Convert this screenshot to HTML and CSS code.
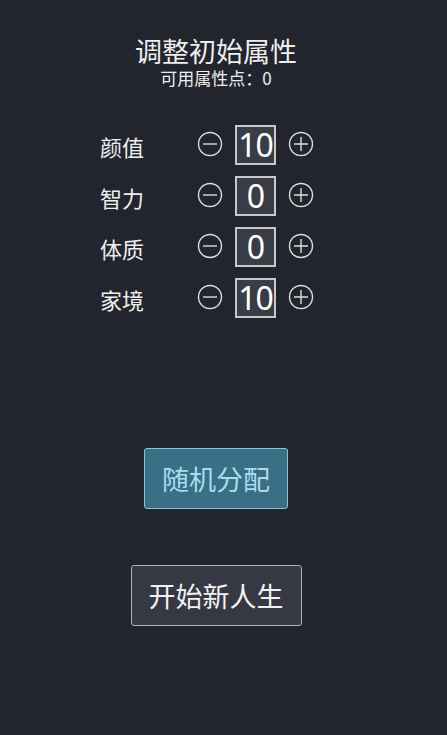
FILE: index.html
```html
<!doctype html>
<html lang="zh-CN">
<head>
  <meta charset="UTF-8">
  <meta name="viewport" content="width=device-width, initial-scale=1">
  <title>调整初始属性</title>
  <link rel="stylesheet" href="styles.css">
</head>
<body>
  <div class="page">
    <h1 class="title">调整初始属性</h1>
    <p class="points">可用属性点：0</p>

    <div class="attrs">
      <div class="row">
        <span class="label">颜值</span>
        <button class="step"><svg viewBox="0 0 26 26"><circle cx="13" cy="13" r="11.5"/><path d="M6 13h14"/></svg></button>
        <span class="value">10</span>
        <button class="step"><svg viewBox="0 0 26 26"><circle cx="13" cy="13" r="11.5"/><path d="M6 13h14M13 6v14"/></svg></button>
      </div>
      <div class="row">
        <span class="label">智力</span>
        <button class="step"><svg viewBox="0 0 26 26"><circle cx="13" cy="13" r="11.5"/><path d="M6 13h14"/></svg></button>
        <span class="value">0</span>
        <button class="step"><svg viewBox="0 0 26 26"><circle cx="13" cy="13" r="11.5"/><path d="M6 13h14M13 6v14"/></svg></button>
      </div>
      <div class="row">
        <span class="label">体质</span>
        <button class="step"><svg viewBox="0 0 26 26"><circle cx="13" cy="13" r="11.5"/><path d="M6 13h14"/></svg></button>
        <span class="value">0</span>
        <button class="step"><svg viewBox="0 0 26 26"><circle cx="13" cy="13" r="11.5"/><path d="M6 13h14M13 6v14"/></svg></button>
      </div>
      <div class="row">
        <span class="label">家境</span>
        <button class="step"><svg viewBox="0 0 26 26"><circle cx="13" cy="13" r="11.5"/><path d="M6 13h14"/></svg></button>
        <span class="value">10</span>
        <button class="step"><svg viewBox="0 0 26 26"><circle cx="13" cy="13" r="11.5"/><path d="M6 13h14M13 6v14"/></svg></button>
      </div>
    </div>

    <button class="btn btn-random">随机分配</button>
    <button class="btn btn-start">开始新人生</button>
  </div>
</body>
</html>
```

FILE: styles.css
```css
html, body {
  height: 100%;
}
body {
  margin: 0;
  background: #22252d;
  color: #eee;
  font-family: "Noto Sans CJK SC", "Noto Sans", sans-serif;
}
.page {
  width: 432px;
  display: flex;
  flex-direction: column;
  align-items: center;
  padding-top: 37px;
}
.title {
  margin: 0;
  font-size: 27px;
  font-weight: normal;
  line-height: 28px;
  color: #eee;
}
.points {
  margin: 2px 0 0;
  font-size: 17px;
  line-height: 21px;
  color: #eee;
}
.attrs {
  width: 232px;
  margin-top: 37px;
  display: flex;
  flex-direction: column;
  gap: 11px;
}
.row {
  display: flex;
  align-items: center;
  height: 40px;
}
.label {
  width: 97px;
  font-size: 22px;
  line-height: 40px;
  padding-top: 2px;
}
.step {
  width: 26px;
  height: 26px;
  padding: 0;
  border: 0;
  background: none;
  margin-top: -2px;
}
.step svg {
  display: block;
  width: 26px;
  height: 26px;
  fill: none;
  stroke: #ddd;
  stroke-width: 1.4;
}
.value {
  box-sizing: border-box;
  width: 41px;
  height: 40px;
  margin: 0 12px;
  border: 2px solid #c8c8c8;
  background: #3a3d46;
  color: #fff;
  font-family: "Noto Sans", sans-serif;
  font-size: 32px;
  line-height: 36px;
  text-align: center;
  letter-spacing: -1px;
}
.btn {
  box-sizing: border-box;
  height: 61px;
  border-radius: 3px;
  font-family: "Noto Sans CJK SC", "Noto Sans", sans-serif;
  font-size: 27px;
  padding: 0;
}
.btn-random {
  width: 144px;
  margin-top: 130px;
  background: #3a6f86;
  border: 1px solid #8fc2d4;
  color: #a9dcee;
}
.btn-start {
  width: 171px;
  margin-top: 56px;
  background: #363944;
  border: 1px solid #b0b0b0;
  color: #f2f2f2;
}
```
